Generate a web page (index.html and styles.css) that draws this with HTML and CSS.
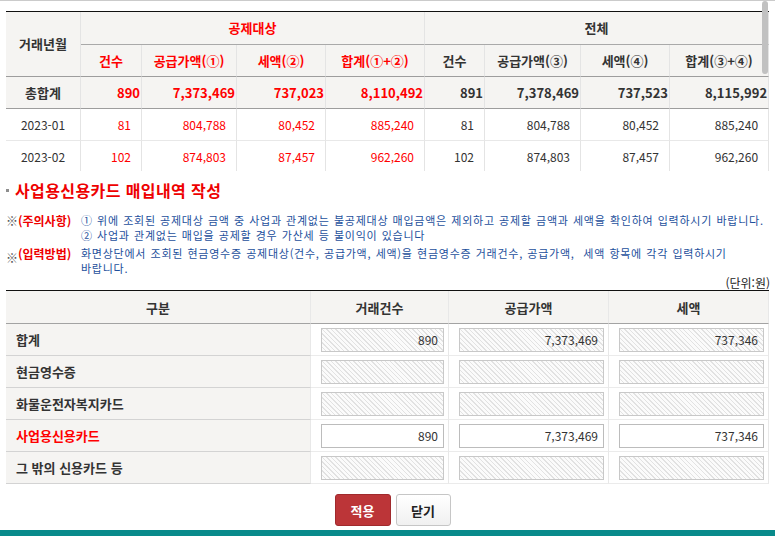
FILE: index.html
```html
<!DOCTYPE html>
<html lang="ko">
<head>
<meta charset="utf-8">
<title>사업용신용카드 매입내역 작성</title>
<link rel="stylesheet" href="styles.css">
</head>
<body>
<div class="scroll-area">
  <table class="sum-table">
    <colgroup>
      <col class="w75"><col class="w61"><col class="w95"><col class="w89"><col class="w99">
      <col class="w60"><col class="w96"><col class="w89"><col class="w99">
    </colgroup>
    <thead>
      <tr class="hr1">
        <th rowspan="2" class="ym">거래년월</th>
        <th colspan="4" class="red">공제대상</th>
        <th colspan="4">전체</th>
      </tr>
      <tr class="hr2">
        <th class="red">건수</th>
        <th class="red">공급가액(①)</th>
        <th class="red">세액(②)</th>
        <th class="red">합계(①+②)</th>
        <th>건수</th>
        <th>공급가액(③)</th>
        <th>세액(④)</th>
        <th>합계(③+④)</th>
      </tr>
    </thead>
    <tbody>
      <tr class="total">
        <th>총합계</th>
        <td class="red">890</td>
        <td class="red">7,373,469</td>
        <td class="red">737,023</td>
        <td class="red">8,110,492</td>
        <td>891</td>
        <td>7,378,469</td>
        <td>737,523</td>
        <td>8,115,992</td>
      </tr>
      <tr class="row">
        <td class="date">2023-01</td>
        <td class="red">81</td>
        <td class="red">804,788</td>
        <td class="red">80,452</td>
        <td class="red">885,240</td>
        <td>81</td>
        <td>804,788</td>
        <td>80,452</td>
        <td>885,240</td>
      </tr>
      <tr class="row">
        <td class="date">2023-02</td>
        <td class="red">102</td>
        <td class="red">874,803</td>
        <td class="red">87,457</td>
        <td class="red">962,260</td>
        <td>102</td>
        <td>874,803</td>
        <td>87,457</td>
        <td>962,260</td>
      </tr>
    </tbody>
  </table>
  <div class="thumb"></div>
</div>

<div class="content">
  <h2 class="title"><span class="bullet"></span>사업용신용카드 매입내역 작성</h2>

  <div class="note">
    <span class="mark">※</span>
    <span class="label">(주의사항)</span>
    <div class="note-body">
      <div>① 위에 조회된 공제대상 금액 중 사업과 관계없는 불공제대상 매입금액은 제외하고 공제할 금액과 세액을 확인하여 입력하시기 바랍니다.</div>
      <div>② 사업과 관계없는 매입을 공제할 경우 가산세 등 불이익이 있습니다</div>
    </div>
  </div>
  <div class="note note2">
    <span class="mark">※</span>
    <span class="label">(입력방법)</span>
    <div class="note-body">
      <div>화면상단에서 조회된 현금영수증 공제대상(건수, 공급가액, 세액)을 현금영수증 거래건수, 공급가액,&nbsp; 세액 항목에 각각 입력하시기</div>
      <div>바랍니다.</div>
    </div>
  </div>

  <div class="unit">(단위:원)</div>

  <table class="input-table">
    <colgroup>
      <col class="w305"><col class="w138"><col class="w160"><col class="w160">
    </colgroup>
    <thead>
      <tr>
        <th>구분</th>
        <th>거래건수</th>
        <th>공급가액</th>
        <th>세액</th>
      </tr>
    </thead>
    <tbody>
      <tr>
        <th>합계</th>
        <td><input class="fld locked" type="text" value="890" readonly></td>
        <td><input class="fld locked" type="text" value="7,373,469" readonly></td>
        <td><input class="fld locked" type="text" value="737,346" readonly></td>
      </tr>
      <tr>
        <th>현금영수증</th>
        <td><input class="fld locked" type="text" value="" readonly></td>
        <td><input class="fld locked" type="text" value="" readonly></td>
        <td><input class="fld locked" type="text" value="" readonly></td>
      </tr>
      <tr>
        <th>화물운전자복지카드</th>
        <td><input class="fld locked" type="text" value="" readonly></td>
        <td><input class="fld locked" type="text" value="" readonly></td>
        <td><input class="fld locked" type="text" value="" readonly></td>
      </tr>
      <tr>
        <th class="red">사업용신용카드</th>
        <td><input class="fld" type="text" value="890"></td>
        <td><input class="fld" type="text" value="7,373,469"></td>
        <td><input class="fld" type="text" value="737,346"></td>
      </tr>
      <tr>
        <th>그 밖의 신용카드 등</th>
        <td><input class="fld locked" type="text" value="" readonly></td>
        <td><input class="fld locked" type="text" value="" readonly></td>
        <td><input class="fld locked" type="text" value="" readonly></td>
      </tr>
    </tbody>
  </table>

  <div class="btn-row">
    <button class="btn btn-apply" type="button">적용</button>
    <button class="btn btn-close" type="button">닫기</button>
  </div>
</div>
<div class="footer-bar"></div>
</body>
</html>
```
FILE: styles.css
```css
html, body {
  margin: 0;
  padding: 0;
  overflow: hidden;
  background: #fff;
}
body {
  width: 775px;
  height: 536px;
  font-family: "Noto Sans CJK KR", "Noto Sans", sans-serif;
  font-size: 12px;
  color: #333;
}

/* ---------- top summary table ---------- */
.scroll-area {
  position: relative;
  height: 171px;
  overflow: hidden;
  border-top: 1px solid #cbcbcb;
  padding: 10px 5px 0 6px;
  box-sizing: border-box;
}
.thumb {
  position: absolute;
  left: 762px;
  top: 0;
  width: 6px;
  height: 73px;
  background: #c1c1c1;
  border-radius: 3px;
}
table {
  border-collapse: separate;
  border-spacing: 0;
  table-layout: fixed;
}
.w75 { width: 75px; }
.w61 { width: 61px; }
.w95 { width: 95px; }
.w89 { width: 89px; }
.w99 { width: 99px; }
.w60 { width: 60px; }
.w96 { width: 96px; }
.w305 { width: 305px; }
.w138 { width: 138px; }
.w160 { width: 160px; }

.sum-table {
  width: 763px;
  border-top: 1px solid #111;
}
.sum-table th,
.sum-table td {
  padding: 0;
  height: 31px;
  border-right: 1px solid #e4e4e4;
  border-bottom: 1px solid #e4e4e4;
  white-space: nowrap;
  line-height: 16px;
}
.sum-table thead th {
  background: #f5f4f2;
  font-size: 13px;
  font-weight: bold;
  color: #333;
  text-align: center;
}
.sum-table .hr1 th {
  height: 32px;
  border-bottom-color: #a9a9a9;
}
.sum-table .hr2 th,
.sum-table thead th.ym {
  border-bottom-color: #9d9d9d;
}
.sum-table .total th,
.sum-table .total td {
  background: #f5f4f2;
  font-size: 13px;
  font-weight: bold;
  border-bottom-color: #9d9d9d;
}
.sum-table .total th {
  text-align: center;
}
.sum-table .total td {
  text-align: right;
  padding-right: 1px;
}
.sum-table .row td {
  text-align: right;
  padding-right: 10px;
  font-size: 12px;
  border-bottom-color: #e8e8e8;
}
.sum-table .row td.date {
  text-align: center;
  padding-right: 0;
}
.sum-table th.red,
.sum-table td.red,
.input-table th.red {
  color: #f00;
}

/* ---------- lower section ---------- */
.content {
  padding: 0 5px 0 6px;
}
.title {
  margin: 9px 0 0;
  display: flex;
  align-items: center;
  font-size: 16px;
  line-height: 20px;
  font-weight: bold;
  color: #ee0000;
  letter-spacing: 0.4px;
}
.bullet {
  width: 3px;
  height: 3px;
  background: #8e8e8e;
  margin-right: 6px;
  flex: none;
}
.note {
  display: flex;
  margin-top: 13px;
  font-size: 11px;
  line-height: 15px;
  color: #1d4f9c;
}
.note2 {
  margin-top: 3px;
}
.mark {
  width: 12px;
  flex: none;
  color: #555;
  font-size: 12px;
  line-height: 15px;
}
.note2 .mark {
  margin-top: 4px;
}
.label {
  width: 63px;
  flex: none;
  color: #ee0000;
  font-weight: bold;
  font-size: 12px;
}
.note-body {
  white-space: nowrap;
  letter-spacing: 0.75px;
  word-spacing: 0.5px;
}
.unit {
  text-align: right;
  font-size: 12px;
  line-height: 14px;
  color: #222;
}

.input-table {
  width: 763px;
  border-top: 1px solid #111;
}
.input-table th,
.input-table td {
  padding: 0;
  height: 31px;
  border-right: 1px solid #e8e8e8;
  border-bottom: 1px solid #ebebeb;
  white-space: nowrap;
}
.input-table thead th {
  height: 32px;
  background: #f5f4f2;
  font-size: 13px;
  font-weight: bold;
  color: #333;
  text-align: center;
  border-bottom-color: #a3a3a3;
}
.input-table tbody th {
  background: #f5f4f2;
  text-align: left;
  padding-left: 10px;
  font-size: 13px;
  font-weight: bold;
  color: #333;
  border-bottom-color: #d3d3d3;
}
.input-table tbody td {
  padding: 0 4px 0 10px;
}
.fld {
  display: block;
  width: 100%;
  height: 24px;
  box-sizing: border-box;
  margin: 0;
  border: 1px solid #bcbcbc;
  border-radius: 0;
  padding: 0 5px;
  font-family: "Noto Sans CJK KR", "Noto Sans", sans-serif;
  font-size: 12px;
  color: #333;
  text-align: right;
  background: #fff;
  outline: none;
}
.fld.locked {
  border-color: #c8c8c8;
  background: repeating-linear-gradient(45deg, #fbfbfb 0, #fbfbfb 2.2px, #e2e2e2 2.2px, #e2e2e2 3.2px);
}

.btn-row {
  display: flex;
  justify-content: center;
  gap: 5px;
  margin-top: 10px;
  padding-left: 9px;
}
.btn {
  height: 32px;
  margin: 0;
  padding: 0;
  border-radius: 3px;
  font-family: "Noto Sans CJK KR", "Noto Sans", sans-serif;
  font-size: 13px;
  font-weight: bold;
  cursor: pointer;
}
.btn-apply {
  width: 56px;
  background: #bc3538;
  border: 1px solid #a02a2d;
  color: #fff;
}
.btn-close {
  width: 55px;
  background: linear-gradient(#ffffff, #f0f0f0);
  border: 1px solid #c6c6c6;
  color: #222;
}
.footer-bar {
  height: 10px;
  margin-top: 4px;
  background: #088a8b;
}
```
